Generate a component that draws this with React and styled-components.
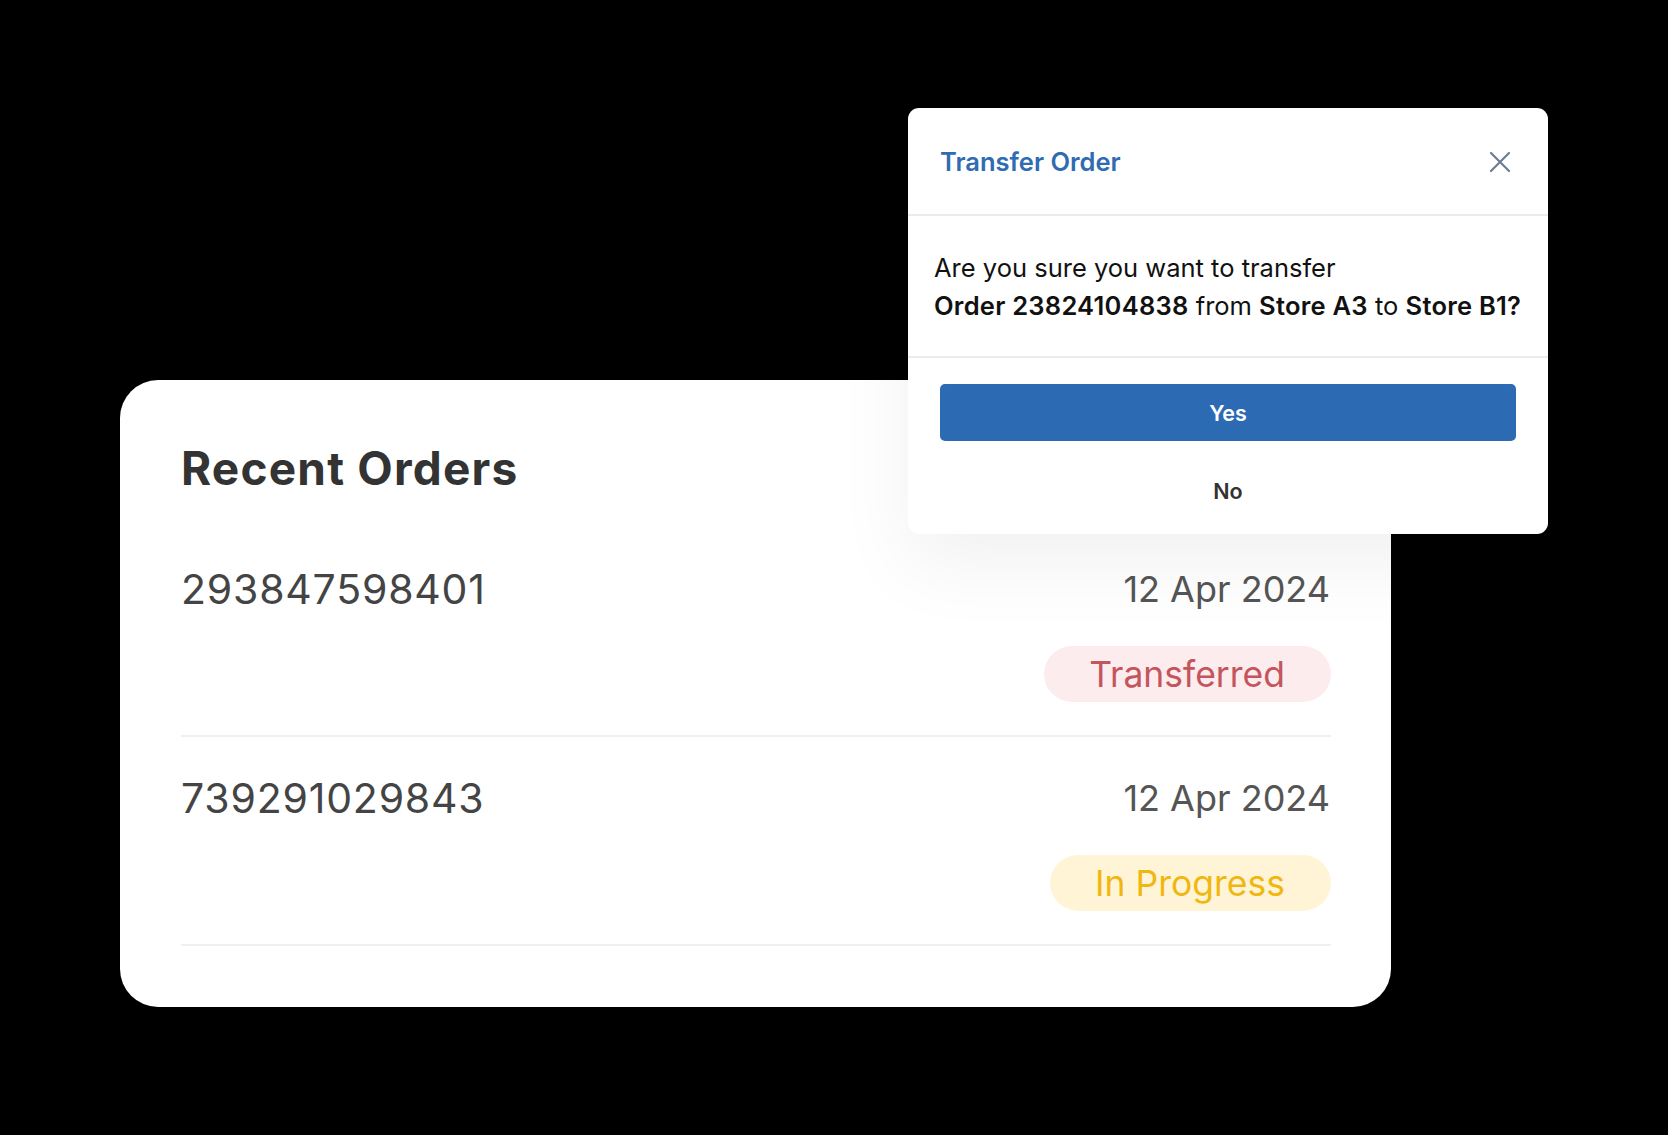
import React from 'react'
import styled, { createGlobalStyle } from 'styled-components'

// Page wide reset, black backdrop
const GlobalStyle = createGlobalStyle`
    * {
        box-sizing: border-box;
    }
    body {
        margin: 0;
        background: #000;
        font-family: Inter, "Noto Sans", "Liberation Sans", sans-serif;
    }
`

const orders = [
    { id: '293847598401', date: '12 Apr 2024', status: 'transferred' },
    { id: '739291029843', date: '12 Apr 2024', status: 'progress' },
]

const statusLabels = {
    transferred: 'Transferred',
    progress: 'In Progress',
}

function App() {
    return (
        <StageStyled>
            <GlobalStyle />

            {/* Card with the list of recent orders */}
            <OrdersCard>
                <CardTitle>Recent Orders</CardTitle>
                {orders.map(order => (
                    <OrderRow key={order.id}>
                        <OrderNumber>{order.id}</OrderNumber>
                        <OrderMeta>
                            <OrderDate>{order.date}</OrderDate>
                            <StatusBadge $status={order.status}>
                                {statusLabels[order.status]}
                            </StatusBadge>
                        </OrderMeta>
                    </OrderRow>
                ))}
            </OrdersCard>

            {/* Confirmation dialog floating over the card */}
            <Dialog role="dialog" aria-labelledby="transfer-title">
                <DialogHeader>
                    <DialogTitle id="transfer-title">Transfer Order</DialogTitle>
                    <CloseButton aria-label="Close">
                        <svg width="22" height="22" viewBox="0 0 22 22" fill="none">
                            <path d="M2 2L20 20M20 2L2 20" stroke="currentColor" strokeWidth="2.2" strokeLinecap="round" />
                        </svg>
                    </CloseButton>
                </DialogHeader>
                <DialogBody>
                    Are you sure you want to transfer
                    <br />
                    <strong>Order 23824104838</strong> from <strong>Store A3</strong> to <strong>Store B1?</strong>
                </DialogBody>
                <DialogActions>
                    <ActionButton $primary>Yes</ActionButton>
                    <ActionButton>No</ActionButton>
                </DialogActions>
            </Dialog>
        </StageStyled>
    )
}

const StageStyled = styled.div`
    position: relative;
    min-height: 1135px;
    padding: 380px 0 0 120px;
`

const OrdersCard = styled.section`
    width: 1271px;
    background: #fff;
    border-radius: 38px;
    padding: 62px 60px 61px 61px;
`

const CardTitle = styled.h2`
    margin: 0 0 33px;
    font-size: 46px;
    line-height: 53px;
    font-weight: 700;
    color: #333;
    letter-spacing: 1.2px;
`

const OrderRow = styled.div`
    display: flex;
    justify-content: space-between;
    align-items: flex-start;
    padding: 37px 0 33px;
    border-bottom: 2px solid #f0f0f2;
`

const OrderNumber = styled.div`
    font-size: 41px;
    line-height: 48px;
    color: #444;
    letter-spacing: 0.8px;
`

const OrderMeta = styled.div`
    display: flex;
    flex-direction: column;
    align-items: flex-end;
    gap: 33px;
`

const OrderDate = styled.div`
    font-size: 36px;
    line-height: 48px;
    color: #555;
    margin-right: 1px;
`

const StatusBadge = styled.span`
    display: inline-flex;
    align-items: center;
    height: 56px;
    padding: 0 46px 0 45px;
    border-radius: 28px;
    font-size: 35.5px;
    background: ${p => (p.$status === 'transferred' ? '#fdeced' : '#fff5d6')};
    color: ${p => (p.$status === 'transferred' ? '#c4555d' : '#f1b711')};
`

const Dialog = styled.div`
    position: absolute;
    left: 908px;
    top: 108px;
    width: 640px;
    height: 426px;
    background: #fff;
    border-radius: 11px;
    box-shadow: 0 30px 80px rgba(0, 0, 0, 0.06);
    display: flex;
    flex-direction: column;
`

const DialogHeader = styled.div`
    display: flex;
    align-items: center;
    justify-content: space-between;
    height: 108px;
    padding: 1px 37px 0 32px;
    border-bottom: 2px solid #ebebeb;
`

const DialogTitle = styled.h3`
    margin: 0;
    font-size: 25.5px;
    font-weight: 600;
    color: #2f6cb1;
`

const CloseButton = styled.button`
    display: flex;
    border: none;
    background: transparent;
    padding: 0;
    color: #6a7d93;
    cursor: pointer;
`

const DialogBody = styled.div`
    padding: 33px 26px 31px;
    font-size: 25.5px;
    line-height: 38px;
    color: #111;
    border-bottom: 2px solid #ececec;
    strong {
        font-weight: 600;
        letter-spacing: 0.25px;
    }
`

const DialogActions = styled.div`
    display: flex;
    flex-direction: column;
    gap: 21px;
    padding: 26px 32px 14px;
`

const ActionButton = styled.button`
    height: 57px;
    border: none;
    border-radius: 5px;
    font-family: inherit;
    font-size: 21.5px;
    font-weight: 600;
    cursor: pointer;
    background: ${p => (p.$primary ? '#2d6ab4' : 'transparent')};
    color: ${p => (p.$primary ? '#fff' : '#333')};
`

export default App
